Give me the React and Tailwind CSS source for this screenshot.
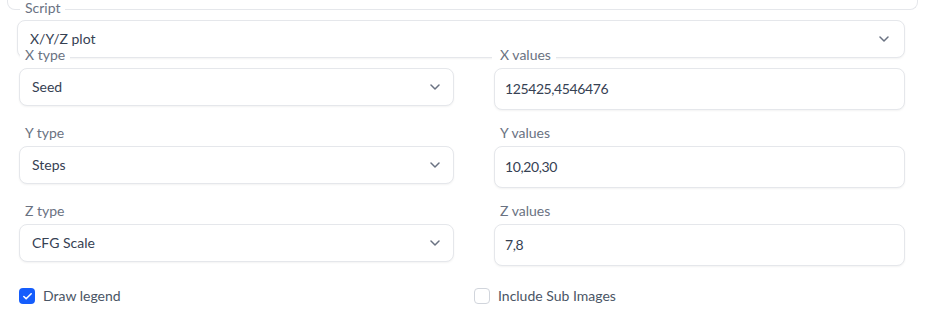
import { Check } from 'lucide-react';

function Chevron() {
  return (
    <svg width="10" height="6" viewBox="0 0 10 6" fill="none" className="text-gray-500">
      <path d="M1 1l4 4 4-4" stroke="currentColor" strokeWidth="1.5" strokeLinecap="round" strokeLinejoin="round" />
    </svg>
  );
}

function Dropdown({ value, className = '', pr = 'pr-[13px]' }) {
  return (
    <div
      className={`flex items-center justify-between border border-gray-200 rounded-[8px] bg-white shadow-[0_1px_2px_rgba(0,0,0,0.05)] pl-[12px] ${pr} text-[14px] text-gray-700 ${className}`}
    >
      <span className="pb-[2px]">{value}</span>
      <Chevron />
    </div>
  );
}

function Field({ label, children, right }) {
  return (
    <div className="flex flex-col">
      <div className="h-[20px] leading-[18px] relative z-10">
        <span
          className={
            right
              ? 'inline-block bg-white ml-[-2px] pl-[8px] pr-[5px] text-[14px] text-gray-500'
              : 'inline-block bg-white ml-[1px] px-[5px] text-[14px] text-gray-500'
          }
        >
          {label}
        </span>
      </div>
      <div className="mt-[3px]">{children}</div>
    </div>
  );
}

function TextBox({ value }) {
  return (
    <div className="h-[42px] flex items-center border border-gray-200 rounded-[8px] bg-white shadow-[0_1px_2px_rgba(0,0,0,0.05)] pl-[10px] text-[14px] text-gray-700">
      <span className="pb-[2px] tracking-[-0.4px]">{value}</span>
    </div>
  );
}

const rows = [
  { type: 'X type', typeValue: 'Seed', values: 'X values', valuesValue: '125425,4546476' },
  { type: 'Y type', typeValue: 'Steps', values: 'Y values', valuesValue: '10,20,30' },
  { type: 'Z type', typeValue: 'CFG Scale', values: 'Z values', valuesValue: '7,8' },
];

export default function App() {
  return (
    <div className="w-[933px] h-[311px] overflow-hidden bg-white font-['Lato',sans-serif]">
      {/* cut-off panel above */}
      <div className="ml-[7px] w-[911px] h-[10px] border border-t-0 border-gray-200 rounded-b-[8px]" />

      <div className="mt-[-12px] h-[20px] leading-[18px] relative z-10">
        <span className="inline-block bg-white ml-[20px] px-[5px] text-[14px] text-gray-500">Script</span>
      </div>
      <Dropdown value="X/Y/Z plot" className="mt-[2px] ml-[17px] w-[888px] h-[38px]" pr="pr-[15px]" />

      <div className="mt-[-13px] ml-[19px] grid grid-cols-[435px_411px] gap-x-[40px] gap-y-[13px]">
        {rows.map((r) => [
          <Field key={r.type} label={r.type}>
            <Dropdown value={r.typeValue} className="h-[38px]" />
          </Field>,
          <Field key={r.values} label={r.values} right>
            <TextBox value={r.valuesValue} />
          </Field>,
        ])}
      </div>

      <div className="mt-[20px] ml-[19px] flex items-center h-[20px] text-[14px] text-gray-600">
        <div className="w-[455px] flex items-center gap-[8px]">
          <span className="w-[16px] h-[16px] rounded-[4px] bg-blue-600 flex items-center justify-center">
            <Check size={11} strokeWidth={3.5} className="text-white" />
          </span>
          <span className="pb-[2px]">Draw legend</span>
        </div>
        <div className="flex items-center gap-[8px]">
          <span className="w-[16px] h-[16px] rounded-[4px] border border-gray-300 bg-white" />
          <span className="pb-[2px]">Include Sub Images</span>
        </div>
      </div>
    </div>
  );
}
